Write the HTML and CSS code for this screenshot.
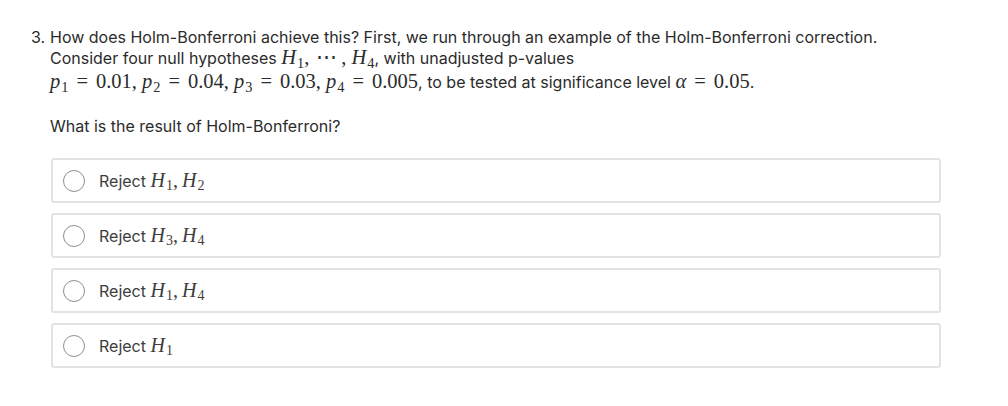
FILE: index.html
```html
<!DOCTYPE html>
<html>
<head>
<meta charset="utf-8">
<link rel="stylesheet" href="styles.css">
</head>
<body>
<div class="question">
  <div class="stem">
    <p class="line first"><span class="num">3.</span>How does Holm-Bonferroni achieve this? First, we run through an example of the Holm-Bonferroni correction.</p>
    <p class="line">Consider four null hypotheses <span class="m"><i>H</i><sub>1</sub><span class="p">,</span><span class="dots">⋯</span><span class="p">,</span><i>H</i><sub>4</sub></span>, with unadjusted p-values</p>
    <p class="line mline"><span class="m"><i>p</i><sub>1</sub><span class="op">=</span>0.01<span class="p">,</span><i>p</i><sub>2</sub><span class="op">=</span>0.04<span class="p">,</span><i>p</i><sub>3</sub><span class="op">=</span>0.03<span class="p">,</span><i>p</i><sub>4</sub><span class="op">=</span>0.005</span>, to be tested at significance level <span class="m"><i>α</i><span class="op">=</span>0.05</span>.</p>
  </div>
  <p class="prompt">What is the result of Holm-Bonferroni?</p>
  <div class="options">
    <label class="option"><span class="radio"></span><span class="label">Reject <span class="m"><i>H</i><sub>1</sub><span class="p">,</span><i>H</i><sub>2</sub></span></span></label>
    <label class="option"><span class="radio"></span><span class="label">Reject <span class="m"><i>H</i><sub>3</sub><span class="p">,</span><i>H</i><sub>4</sub></span></span></label>
    <label class="option"><span class="radio"></span><span class="label">Reject <span class="m"><i>H</i><sub>1</sub><span class="p">,</span><i>H</i><sub>4</sub></span></span></label>
    <label class="option"><span class="radio"></span><span class="label">Reject <span class="m"><i>H</i><sub>1</sub></span></span></label>
  </div>
</div>
</body>
</html>
```
FILE: styles.css
```css
html, body {
  margin: 0;
  padding: 0;
  background: #ffffff;
}
body {
  font-family: Inter, "Noto Sans", sans-serif;
  font-size: 16px;
  color: #2b2b2b;
}
.question {
  padding: 27px 0 0 31px;
  width: 910px;
}
.stem p {
  margin: 0;
}
.line {
  padding-left: 19px;
  line-height: 21px;
}
.line.first {
  padding-left: 0;
}
.num {
  display: inline-block;
  width: 19px;
}
.mline {
  line-height: 24px;
  margin-top: 1px !important;
}
.m {
  font-family: "Liberation Serif", "DejaVu Serif", serif;
  font-size: 20.5px;
  line-height: 0;
  white-space: nowrap;
}
.m i {
  font-style: italic;
}
.m sub {
  font-size: 0.7em;
  vertical-align: -0.25em;
  line-height: 0;
  margin-left: 1px;
}
.m .op {
  padding: 0 8px;
}
.m .p {
  margin-right: 5px;
}
.dots {
  display: inline-block;
  margin: 0 3px 0 2px;
  letter-spacing: 1px;
}
.prompt {
  margin: 22px 0 0 19px;
  line-height: 21px;
}
.options {
  margin: 21px 0 0 20px;
  display: flex;
  flex-direction: column;
  gap: 10px;
}
.option {
  display: flex;
  align-items: center;
  height: 41px;
  border: 2px solid #e3e3e3;
  border-radius: 3px;
  padding-left: 10px;
  color: #3d3d3d;
}
.option .m {
  font-size: 20px;
}
.option .m .p {
  margin-right: 4px;
}
.radio {
  border: 1.5px solid #8f8f8f;
  border-radius: 50%;
  box-sizing: border-box;
  flex: none;
  width: 22px;
  height: 22px;
}
.label {
  margin-left: 14px;
}
```
